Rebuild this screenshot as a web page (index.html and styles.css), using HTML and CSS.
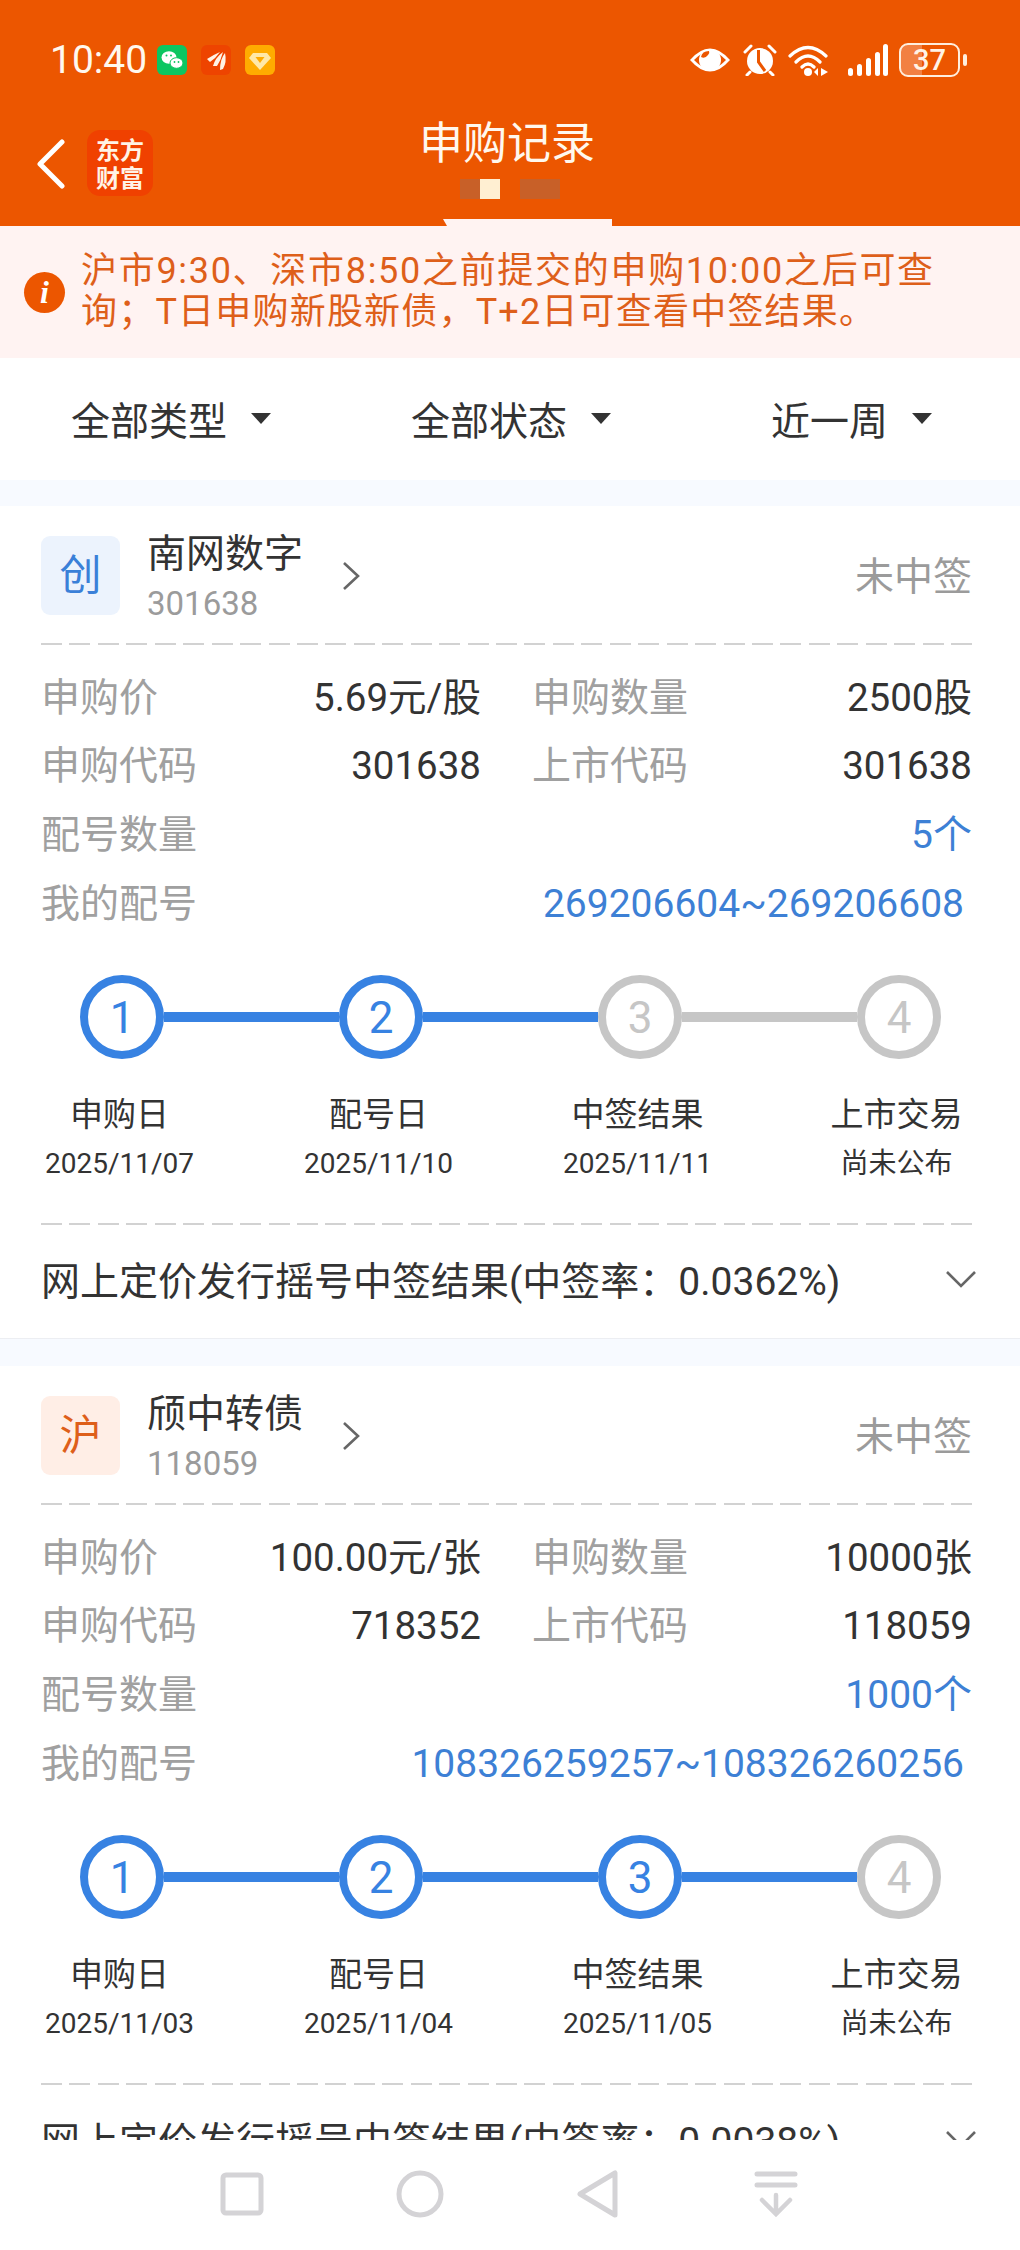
FILE: index.html
```html
<!DOCTYPE html>
<html lang="zh-CN">
  <head>
    <meta charset="UTF-8" />
    <meta name="viewport" content="width=device-width, initial-scale=1.0" />
    <title>申购记录</title>
    <link rel="stylesheet" href="styles.css">
  </head>
  <body>
    <div class="page">
      <header class="header">
        <!-- 状态栏 -->
        <div class="status">
          <div class="status-left">
            <span class="time">10:40</span>
            <svg class="app-icon" viewBox="0 0 30 30"><rect width="30" height="30" rx="6" fill="#0cc661"/><ellipse cx="12" cy="12.5" rx="7.5" ry="6.2" fill="#fff"/><ellipse cx="19.5" cy="18" rx="6.5" ry="5.3" fill="#fff" stroke="#0cc661" stroke-width="1"/><circle cx="9.5" cy="10.5" r="1" fill="#0cc661"/><circle cx="14" cy="10.5" r="1" fill="#0cc661"/><circle cx="17.5" cy="17" r=".9" fill="#0cc661"/><circle cx="21.5" cy="17" r=".9" fill="#0cc661"/></svg>
            <svg class="app-icon" viewBox="0 0 30 30"><rect width="30" height="30" rx="6" fill="#ee4400"/><path d="M6 14 Q12 10 19 7 Q15 13 9 17Z M12 21 Q14 13 22 7 Q20 15 16 21Z M19 25 Q19 14 24 8 Q26 17 22 24Z" fill="#fff3e6"/></svg>
            <svg class="app-icon" viewBox="0 0 30 30"><rect width="30" height="30" rx="6" fill="#ffac00"/><path d="M8 8 H22 L26 13 L15 25 L4 13Z" fill="#ffe9a8"/><path d="M10.5 12 H19.5 L15 18Z" fill="#ffac00"/></svg>
          </div>
          <div class="status-right">
            <svg class="eye" viewBox="0 0 42 28"><path d="M1 14 Q21 -9 41 14 Q21 37 1 14Z" fill="#fff"/><path d="M5 14 Q21 -3 37 14 Q21 31 5 14Z" fill="#ec5600"/><circle cx="21" cy="14" r="11" fill="#fff"/><path d="M12 11 Q16 13 19 9 Q21 7 20 5 Q13 5 12 11Z" fill="#ec5600"/></svg>
            <svg class="alarm" viewBox="0 0 34 32"><circle cx="17" cy="17" r="13" fill="#fff"/><path d="M2 8 L8 2 M32 8 L26 2 M7 28 L4 31 M27 28 L30 31" stroke="#fff" stroke-width="3" stroke-linecap="round"/><path d="M15.5 6 V18 L22 27" stroke="#ec5600" stroke-width="3" fill="none"/></svg>
            <svg class="wifi" viewBox="0 0 40 32"><path d="M2 12 Q20 -5 38 12 M8 18 Q20 6 32 18 M14 23 Q20 17 26 23" stroke="#fff" stroke-width="3.2" fill="none" stroke-linecap="round"/><circle cx="20" cy="28" r="4" fill="#fff"/><path d="M30 24 V32 L26 28Z M33 24 V32 L40 28Z" fill="#fff"/></svg>
            <svg class="signal" viewBox="0 0 40 32"><rect x="0" y="24" width="5" height="8" rx="2.5" fill="#fff"/><rect x="9" y="20" width="5" height="12" rx="2.5" fill="#fff"/><rect x="18" y="14" width="5" height="18" rx="2.5" fill="#fff"/><rect x="27" y="8" width="5" height="24" rx="2.5" fill="#fff"/><rect x="35" y="0" width="5" height="32" rx="2.5" fill="#fff"/></svg>
            <div class="battery"><span>37</span></div>
            <span class="battery-tip"></span>
          </div>
        </div>
        <!-- 标题栏 -->
        <nav class="titlebar">
          <div class="title-left">
            <svg class="back" viewBox="0 0 30 50"><path d="M26 3 L4 25 L26 47" stroke="#fff" stroke-width="5" fill="none" stroke-linecap="round" stroke-linejoin="round"/></svg>
            <div class="logo"><span>东方</span><span>财富</span></div>
          </div>
          <div class="title-mid">
            <h1>申购记录</h1>
            <div class="dots">
              <i class="dot"></i><i class="dot dot-on"></i><i class="dot dot-skip"></i><i class="dot"></i><i class="dot"></i>
            </div>
          </div>
        </nav>
        <div class="tab"></div>
      </header>

      <div class="notice">
        <span class="notice-icon">i</span>
        <p><span class="notice-line">沪市9:30、深市8:50之前提交的申购10:00之后可查</span><span class="notice-line notice-line-2">询；T日申购新股新债，T+2日可查看中签结果。</span></p>
      </div>

      <div class="filters">
        <div class="filter filter-type">全部类型<i class="caret"></i></div>
        <div class="filter filter-state">全部状态<i class="caret"></i></div>
        <div class="filter filter-time">近一周<i class="caret"></i></div>
      </div>

      <main class="list">
        <section class="card">
          <div class="head">
            <span class="badge badge-blue">创</span>
            <div class="name-box">
              <div class="name">南网数字</div>
              <div class="code">301638</div>
            </div>
            <svg class="arrow-right" viewBox="0 0 18 30"><path d="M2 2 L16 15 L2 28" stroke="#666" stroke-width="2.6" fill="none"/></svg>
            <span class="state">未中签</span>
          </div>
          <div class="dash"></div>
          <div class="info">
            <div class="pair"><span class="label">申购价</span><span class="value">5.69元/股</span></div>
            <div class="pair"><span class="label">申购数量</span><span class="value">2500股</span></div>
            <div class="pair"><span class="label">申购代码</span><span class="value">301638</span></div>
            <div class="pair"><span class="label">上市代码</span><span class="value">301638</span></div>
            <div class="pair pair-wide"><span class="label">配号数量</span><span class="blue">5个</span></div>
            <div class="pair pair-wide"><span class="label">我的配号</span><span class="blue number-range">269206604~269206608</span></div>
          </div>
          <div class="track">
            <span class="circle">1</span><i class="line"></i>
            <span class="circle">2</span><i class="line"></i>
            <span class="circle circle-off">3</span><i class="line line-off"></i>
            <span class="circle circle-off">4</span>
          </div>
          <div class="steps">
            <div class="step"><div>申购日</div><small>2025/11/07</small></div>
            <div class="step"><div>配号日</div><small>2025/11/10</small></div>
            <div class="step"><div>中签结果</div><small>2025/11/11</small></div>
            <div class="step"><div>上市交易</div><small>尚未公布</small></div>
          </div>
          <div class="dash"></div>
          <div class="result">
            <span>网上定价发行摇号中签结果(中签率：0.0362%)</span>
            <svg class="arrow-down" viewBox="0 0 30 18"><path d="M1 2 L15 16 L29 2" stroke="#666" stroke-width="2.6" fill="none"/></svg>
          </div>
        </section>

        <section class="card">
          <div class="head">
            <span class="badge badge-orange">沪</span>
            <div class="name-box">
              <div class="name">颀中转债</div>
              <div class="code">118059</div>
            </div>
            <svg class="arrow-right" viewBox="0 0 18 30"><path d="M2 2 L16 15 L2 28" stroke="#666" stroke-width="2.6" fill="none"/></svg>
            <span class="state">未中签</span>
          </div>
          <div class="dash"></div>
          <div class="info">
            <div class="pair"><span class="label">申购价</span><span class="value">100.00元/张</span></div>
            <div class="pair"><span class="label">申购数量</span><span class="value">10000张</span></div>
            <div class="pair"><span class="label">申购代码</span><span class="value">718352</span></div>
            <div class="pair"><span class="label">上市代码</span><span class="value">118059</span></div>
            <div class="pair pair-wide"><span class="label">配号数量</span><span class="blue">1000个</span></div>
            <div class="pair pair-wide"><span class="label">我的配号</span><span class="blue number-range">108326259257~108326260256</span></div>
          </div>
          <div class="track">
            <span class="circle">1</span><i class="line"></i>
            <span class="circle">2</span><i class="line"></i>
            <span class="circle">3</span><i class="line"></i>
            <span class="circle circle-off">4</span>
          </div>
          <div class="steps">
            <div class="step"><div>申购日</div><small>2025/11/03</small></div>
            <div class="step"><div>配号日</div><small>2025/11/04</small></div>
            <div class="step"><div>中签结果</div><small>2025/11/05</small></div>
            <div class="step"><div>上市交易</div><small>尚未公布</small></div>
          </div>
          <div class="dash"></div>
          <div class="result">
            <span>网上定价发行摇号中签结果(中签率：0.0038%)</span>
            <svg class="arrow-down" viewBox="0 0 30 18"><path d="M1 2 L15 16 L29 2" stroke="#666" stroke-width="2.6" fill="none"/></svg>
          </div>
        </section>
      </main>

      <!-- 底部导航 -->
      <footer class="sysnav">
        <svg class="sys-icon" viewBox="0 0 48 48"><rect x="5" y="5" width="38" height="38" rx="3" stroke="#d4d3d6" stroke-width="5" fill="none"/></svg>
        <svg class="sys-icon" viewBox="0 0 48 48"><circle cx="24" cy="24" r="21" stroke="#d4d3d6" stroke-width="5" fill="none"/></svg>
        <svg class="sys-icon" viewBox="0 0 48 48"><path d="M41 3 V45 L6 24Z" stroke="#d4d3d6" stroke-width="5" fill="none" stroke-linejoin="round"/></svg>
        <svg class="sys-icon" viewBox="0 0 48 48"><path d="M5 4 H43 M5 15 H43" stroke="#d4d3d6" stroke-width="5" stroke-linecap="round"/><path d="M24 25 V44 M10 30 L24 44 L38 30" stroke="#d4d3d6" stroke-width="4.5" fill="none" stroke-linecap="round"/></svg>
      </footer>
    </div>
  </body>
</html>
```

FILE: styles.css
```css
* {
  box-sizing: border-box;
}

body {
  margin: 0;
  padding: 0;
  font-family: Roboto, "Noto Sans CJK SC", sans-serif;
  color: #333;
  background-color: #fff;
}

.page {
  width: 1020px;
  height: 2250px;
  display: flex;
  flex-direction: column;
  overflow: hidden;
}

/* header */
.header {
  height: 226px;
  flex: none;
  background-color: #ec5600;
  color: #fff;
}

.status {
  height: 120px;
  padding: 0 53px 0 50px;
  display: flex;
  justify-content: space-between;
  align-items: center;
}
.status-left,
.status-right {
  display: flex;
  align-items: center;
}
.time {
  width: 107px;
  font-size: 39px;
  color: #fff8ee;
}
.app-icon {
  width: 30px;
  height: 30px;
  margin-right: 14px;
}
.eye {
  width: 42px;
  height: 28px;
  margin-right: 12px;
}
.alarm {
  width: 34px;
  height: 32px;
  margin-right: 11px;
}
.wifi {
  width: 40px;
  height: 32px;
  margin-right: 20px;
}
.signal {
  width: 40px;
  height: 32px;
  margin-right: 11px;
}
.battery {
  width: 61px;
  height: 34px;
  border: 2.5px solid #ffeedd;
  border-radius: 9px;
  background: linear-gradient(90deg, #f28042 37%, transparent 37%);
  display: flex;
  align-items: center;
  justify-content: center;
  font-size: 29px;
  font-weight: 500;
  color: #fff3e6;
}
.battery-tip {
  width: 4px;
  height: 12px;
  margin-left: 3px;
  border-radius: 2px;
  background-color: #ffeedd;
}

.titlebar {
  height: 99px;
  display: grid;
  grid-template-columns: 1fr 200px 1fr;
}
.title-left {
  padding: 10px 0 0 36px;
  display: flex;
  align-items: flex-start;
}
.back {
  width: 30px;
  height: 50px;
  margin-top: 9px;
}
.logo {
  width: 66px;
  height: 66px;
  margin-left: 21px;
  padding-top: 5px;
  border-radius: 13px;
  background-color: #f04100;
  font-family: "Noto Sans CJK SC", sans-serif;
  font-size: 24px;
  font-weight: 700;
  text-align: center;
  color: #fff3e6;
}
.logo span {
  display: block;
  height: 28px;
  line-height: 28px;
}
.title-mid {
  text-align: center;
}
.title-mid h1 {
  margin: 1px 6px 0 0;
  font-size: 44px;
  font-weight: 400;
  line-height: 46px;
  color: #fff8ee;
}
.dots {
  margin-top: 12px;
  margin-left: 50px;
  display: flex;
}
.dot {
  width: 20px;
  height: 20px;
  background-color: #c86028;
}
.dot-on {
  background-color: #ffefd2;
}
.dot-skip {
  background-color: transparent;
}
.tab {
  width: 169px;
  height: 7px;
  margin-left: 443px;
  background-color: #fff3f2;
  clip-path: polygon(0 0, 100% 0, 100% 100%, 4px 100%);
}

/* notice */
.notice {
  height: 132px;
  flex: none;
  padding-left: 24px;
  display: flex;
  align-items: center;
  background-color: #fff3f2;
  color: #de5f1a;
}
.notice-icon {
  width: 41px;
  height: 41px;
  flex: none;
  margin-right: 16px;
  border-radius: 50%;
  background-color: #ec5600;
  color: #fff;
  font-family: "Liberation Serif", serif;
  font-size: 32px;
  font-style: italic;
  font-weight: 700;
  line-height: 41px;
  text-align: center;
}
.notice p {
  margin: 0;
  font-size: 36px;
  line-height: 41.5px;
  white-space: nowrap;
}
.notice-line {
  display: block;
  letter-spacing: 1.7px;
}
.notice-line-2 {
  letter-spacing: 1.2px;
}

/* filters */
.filters {
  height: 122px;
  flex: none;
  padding-bottom: 2px;
  display: flex;
  align-items: center;
  font-size: 39px;
}
.filter {
  display: flex;
  align-items: center;
}
.filter-type {
  margin-left: 71px;
}
.filter-state {
  margin-left: 140px;
}
.filter-time {
  margin-left: 160px;
}
.caret {
  width: 0;
  height: 0;
  margin-left: 24px;
  border-left: 10px solid transparent;
  border-right: 10px solid transparent;
  border-top: 11px solid #333;
}

/* record cards */
.list {
  flex: 1;
  min-height: 0;
  overflow: hidden;
  padding-top: 26px;
  background-color: #f7faff;
}
.card {
  height: 833px;
  margin-bottom: 27px;
  padding: 30px 48px 0 41px;
  background-color: #fff;
  border-bottom: 1px solid #eceef2;
}

.head {
  height: 79px;
  display: flex;
  align-items: center;
}
.badge {
  width: 79px;
  height: 79px;
  border-radius: 9px;
  font-size: 42px;
  line-height: 79px;
  text-align: center;
}
.badge-blue {
  background-color: #ecf3fd;
  color: #3a80d8;
}
.badge-orange {
  background-color: #ffeee6;
  color: #de5f1a;
}
.name-box {
  width: 195px;
  margin: 6px 0 0 27px;
}
.name {
  font-size: 39px;
  line-height: 50px;
}
.code {
  font-size: 33px;
  line-height: 50px;
  color: #9b9b9b;
}
.arrow-right {
  width: 18px;
  height: 30px;
}
.state {
  margin: 0 0 5px auto;
  font-size: 39px;
  color: #9b9b9b;
}

.dash {
  height: 1.5px;
  background: repeating-linear-gradient(90deg, #d2d2d2 0 21px, transparent 21px 28.44px);
}
.head + .dash {
  margin-top: 28px;
}

.info {
  margin-top: 19px;
  display: grid;
  grid-template-columns: 440px 440px;
  column-gap: 51px;
  font-size: 39px;
  line-height: 68.7px;
}
.pair {
  display: flex;
  justify-content: space-between;
}
.pair-wide {
  grid-column: 1 / 3;
}
.label {
  color: #a0a0a0;
}
.value {
  font-size: 38.5px;
}
.blue {
  color: #3d80d5;
}
.number-range {
  margin-right: 8px;
}

.track {
  margin: 37px 0 0 39px;
  display: flex;
  align-items: center;
}
.circle {
  width: 84px;
  height: 84px;
  flex: none;
  position: relative;
  border: 8px solid #3782e2;
  border-radius: 50%;
  background-color: #fff;
  color: #3782e2;
  font-size: 44px;
  line-height: 71px;
  text-align: center;
}
.circle-off {
  border-color: #c6c6c6;
  color: #c6c6c6;
}
.line {
  width: 175px;
  height: 10px;
  flex: none;
  background-color: #3782e2;
}
.line-off {
  background-color: #c6c6c6;
}

.steps {
  margin: 32px 0 35px -51px;
  display: grid;
  grid-template-columns: repeat(4, 259px);
}
.step {
  font-size: 33px;
  line-height: 48px;
  text-align: center;
}
.step small {
  display: block;
  margin-top: 1px;
  font-size: 28px;
}

.result {
  height: 106px;
  display: flex;
  align-items: center;
  justify-content: space-between;
  font-size: 39px;
  white-space: nowrap;
}
.arrow-down {
  width: 30px;
  height: 18px;
  margin: 3px -4px 0 0;
  flex: none;
}

/* system nav */
.sysnav {
  height: 110px;
  flex: none;
  padding: 30px 0 0 153px;
  display: grid;
  grid-template-columns: repeat(4, 178px);
  justify-items: center;
  align-items: start;
  background-color: #fff;
}
.sys-icon {
  width: 48px;
  height: 48px;
}
```
